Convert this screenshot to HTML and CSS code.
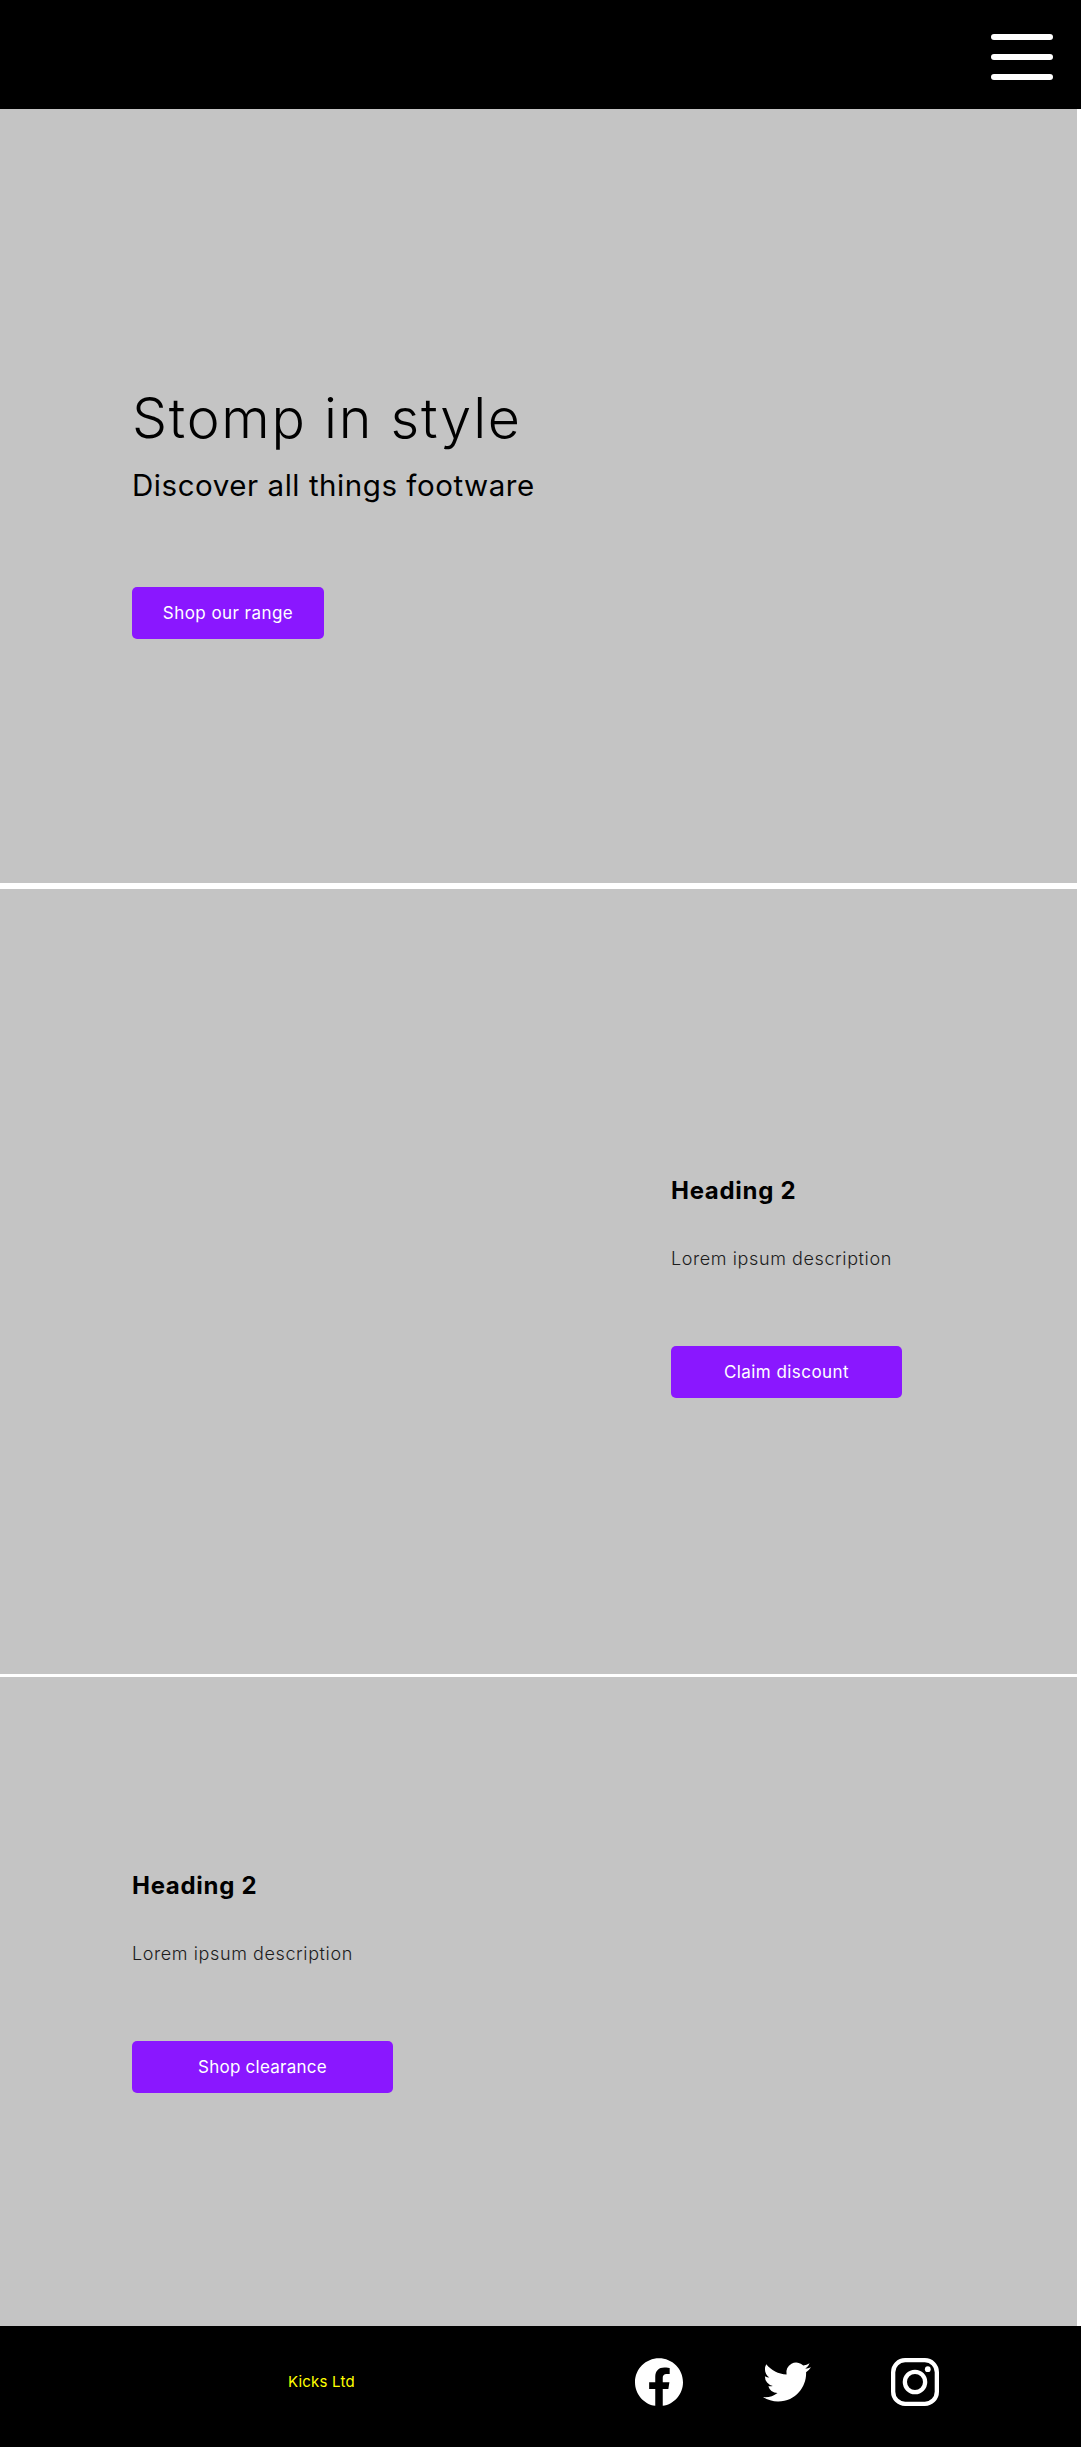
FILE: index.html
```html
<!DOCTYPE html>
<html lang="en">
<head>
<meta charset="utf-8">
<title>Kicks Ltd</title>
<link rel="stylesheet" href="styles.css">
</head>
<body>
<header class="header">
  <button class="menu" aria-label="Menu"><span class="bar"></span><span class="bar"></span><span class="bar"></span></button>
</header>
<main>
  <section class="panel hero">
    <h1 class="title">Stomp in style</h1>
    <p class="subtitle">Discover all things footware</p>
    <a class="button range">Shop our range</a>
  </section>
  <section class="panel discount">
    <h2 class="heading">Heading 2</h2>
    <p class="description">Lorem ipsum description</p>
    <a class="button claim">Claim discount</a>
  </section>
  <section class="panel clearance">
    <h2 class="heading">Heading 2</h2>
    <p class="description">Lorem ipsum description</p>
    <a class="button clear">Shop clearance</a>
  </section>
</main>
<footer class="footer">
  <p class="company">Kicks Ltd</p>
  <nav class="social">
    <svg class="icon" viewBox="0 0 24 24"><path d="M24 12.073c0-6.627-5.373-12-12-12s-12 5.373-12 12c0 5.99 4.388 10.954 10.125 11.854v-8.385H7.078v-3.47h3.047V9.43c0-3.007 1.792-4.669 4.533-4.669 1.312 0 2.686.235 2.686.235v2.953H15.83c-1.491 0-1.956.925-1.956 1.874v2.25h3.328l-.532 3.47h-2.796v8.385C19.612 23.027 24 18.062 24 12.073z"/></svg>
    <svg class="icon" viewBox="0 0 24 24"><path d="M23.953 4.57a10 10 0 01-2.825.775 4.958 4.958 0 002.163-2.723c-.951.555-2.005.959-3.127 1.184a4.92 4.92 0 00-8.384 4.482C7.69 8.095 4.067 6.13 1.64 3.162a4.822 4.822 0 00-.666 2.475c0 1.71.87 3.213 2.188 4.096a4.904 4.904 0 01-2.228-.616v.06a4.923 4.923 0 003.946 4.827 4.996 4.996 0 01-2.212.085 4.936 4.936 0 004.604 3.417 9.867 9.867 0 01-6.102 2.105c-.39 0-.779-.023-1.17-.067a13.995 13.995 0 007.557 2.209c9.053 0 13.998-7.496 13.998-13.985 0-.21 0-.42-.015-.63A9.935 9.935 0 0024 4.59z"/></svg>
    <svg class="icon" viewBox="0 0 48 48"><rect x="2.15" y="2.15" width="43.7" height="43.7" rx="12" fill="none" stroke="#fff" stroke-width="4.3"/><circle cx="24" cy="24" r="10.15" fill="none" stroke="#fff" stroke-width="4.3"/><circle cx="36.8" cy="11.2" r="2.9"/></svg>
  </nav>
</footer>
</body>
</html>
```
FILE: styles.css
```css
* { box-sizing: border-box; }
body { margin: 0; background: #fff; font-family: Inter, sans-serif; color: #000; }
h1, h2, p { margin: 0; white-space: nowrap; }
.header { height: 109px; padding: 34px 28px 0 0; background: #000; display: flex; justify-content: flex-end; align-items: flex-start; }
.menu { display: flex; flex-direction: column; gap: 14px; width: 62px; padding: 0; border: 0; background: none; }
.bar { width: 62px; height: 6px; border-radius: 3px; background: #fff; }
.panel { display: flex; flex-direction: column; align-items: flex-start; width: 1077px; background: #c4c4c4; }
.hero { height: 774px; padding: 275px 0 0 132px; margin-bottom: 6px; }
.discount { height: 785px; padding: 287px 0 0 671px; margin-bottom: 3px; }
.clearance { height: 649px; padding: 194px 0 0 132px; }
.title { font-size: 55.5px; line-height: 68px; font-weight: 300; letter-spacing: 1.75px; }
.subtitle { margin-top: 15px; font-size: 29.5px; line-height: 37px; font-weight: 400; letter-spacing: 0.55px; }
.heading { font-size: 24px; line-height: 29px; font-weight: 700; letter-spacing: 0.7px; }
.description { margin-top: 43px; font-size: 18px; line-height: 22px; font-weight: 300; letter-spacing: 0.6px; color: #1c1c1c; }
.button { height: 52px; border-radius: 5px; background: #8a17ff; color: #fff; font-size: 17px; font-weight: 400; line-height: 52px; letter-spacing: 0.45px; text-align: center; }
.range { width: 192px; margin-top: 83px; }
.claim { width: 231px; margin-top: 76px; }
.clear { width: 261px; margin-top: 76px; letter-spacing: 0.25px; }
.footer { display: flex; justify-content: space-between; align-items: flex-start; height: 121px; padding: 32px 142px 0 288px; background: #000; }
.company { font-size: 15px; line-height: 48px; letter-spacing: 0.2px; color: #ff0; }
.social { display: flex; gap: 80px; }
.icon { display: block; width: 48px; height: 48px; fill: #fff; }
```
